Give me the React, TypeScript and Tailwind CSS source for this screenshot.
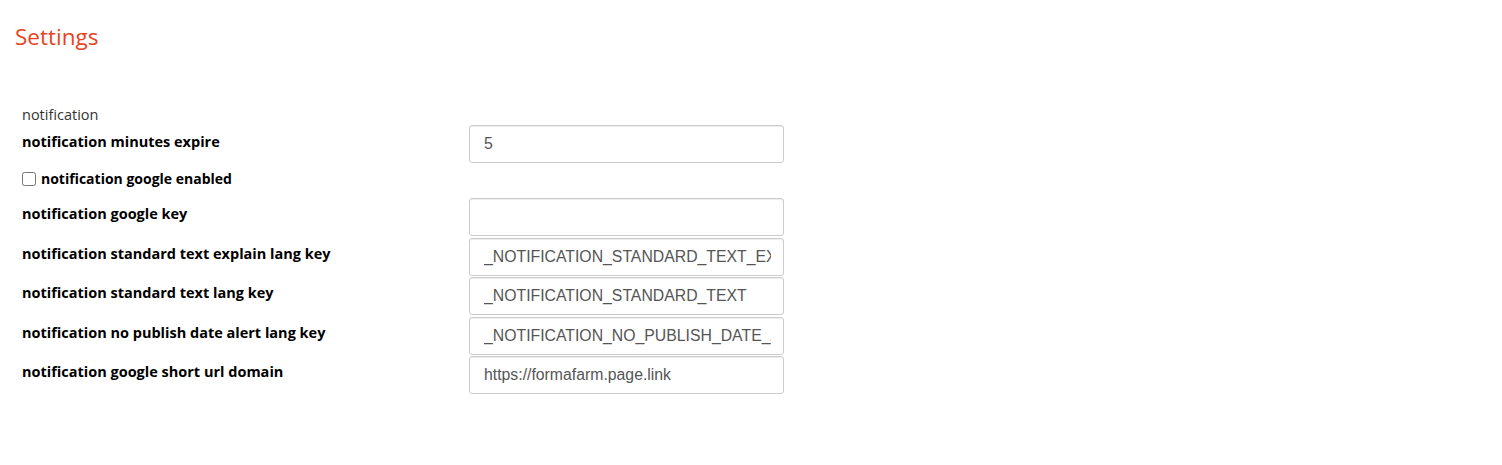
import React from "react";

interface Field {
  label: string;
  value: string;
}

const fields: Field[] = [
  { label: "notification google key", value: "" },
  {
    label: "notification standard text explain lang key",
    value: "_NOTIFICATION_STANDARD_TEXT_EXPLAIN",
  },
  {
    label: "notification standard text lang key",
    value: "_NOTIFICATION_STANDARD_TEXT",
  },
  {
    label: "notification no publish date alert lang key",
    value: "_NOTIFICATION_NO_PUBLISH_DATE_ALERT",
  },
  {
    label: "notification google short url domain",
    value: "https://formafarm.page.link",
  },
];

function TextInput({ value }: { value: string }) {
  return (
    <input
      type="text"
      readOnly
      defaultValue={value}
      className="box-border h-[38px] w-[315px] rounded-[3px] border border-[#cccccc] bg-white pl-[14px] pr-[12px] text-[15.8px] text-[#555555] shadow-[inset_0_1px_1px_rgba(0,0,0,0.075)] outline-none"
      style={{ fontFamily: '"Liberation Sans", Arial, sans-serif' }}
    />
  );
}

function Row({ label, value, first }: Field & { first?: boolean }) {
  return (
    <div className="flex">
      <label
        className={
          first
            ? "w-[447px] pt-[7px] text-[14.5px] font-bold leading-[20px] text-black"
            : "w-[447px] pt-[6px] text-[14.5px] font-bold leading-[20px] text-black"
        }
      >
        {label}
      </label>
      <TextInput value={value} />
    </div>
  );
}

export default function App() {
  return (
    <div
      className="min-h-[465px] w-full bg-white pl-[15px] pt-[23px]"
      style={{ fontFamily: '"Open Sans", "Noto Sans", sans-serif' }}
    >
      <h1 className="text-[22.5px] font-normal leading-[28px] text-[#e8431f]">
        Settings
      </h1>

      <div className="pl-[7px] pt-[54px]">
        <p className="text-[14.5px] leading-[20px] text-[#333333]">notification</p>

        {/* minutes expire */}
        <Row label="notification minutes expire" value="5" first />

        {/* google enabled */}
        <div className="flex h-[35px] items-start pt-[6px]">
          <label className="flex items-center gap-[5px] text-[14px] font-bold leading-[20px] text-black">
            <input type="checkbox" className="m-0 h-[14px] w-[14px]" />
            notification google enabled
          </label>
        </div>

        <div className="flex flex-col gap-[1.5px]">
          {fields.map((f) => (
            <Row key={f.label} label={f.label} value={f.value} />
          ))}
        </div>
      </div>
    </div>
  );
}
